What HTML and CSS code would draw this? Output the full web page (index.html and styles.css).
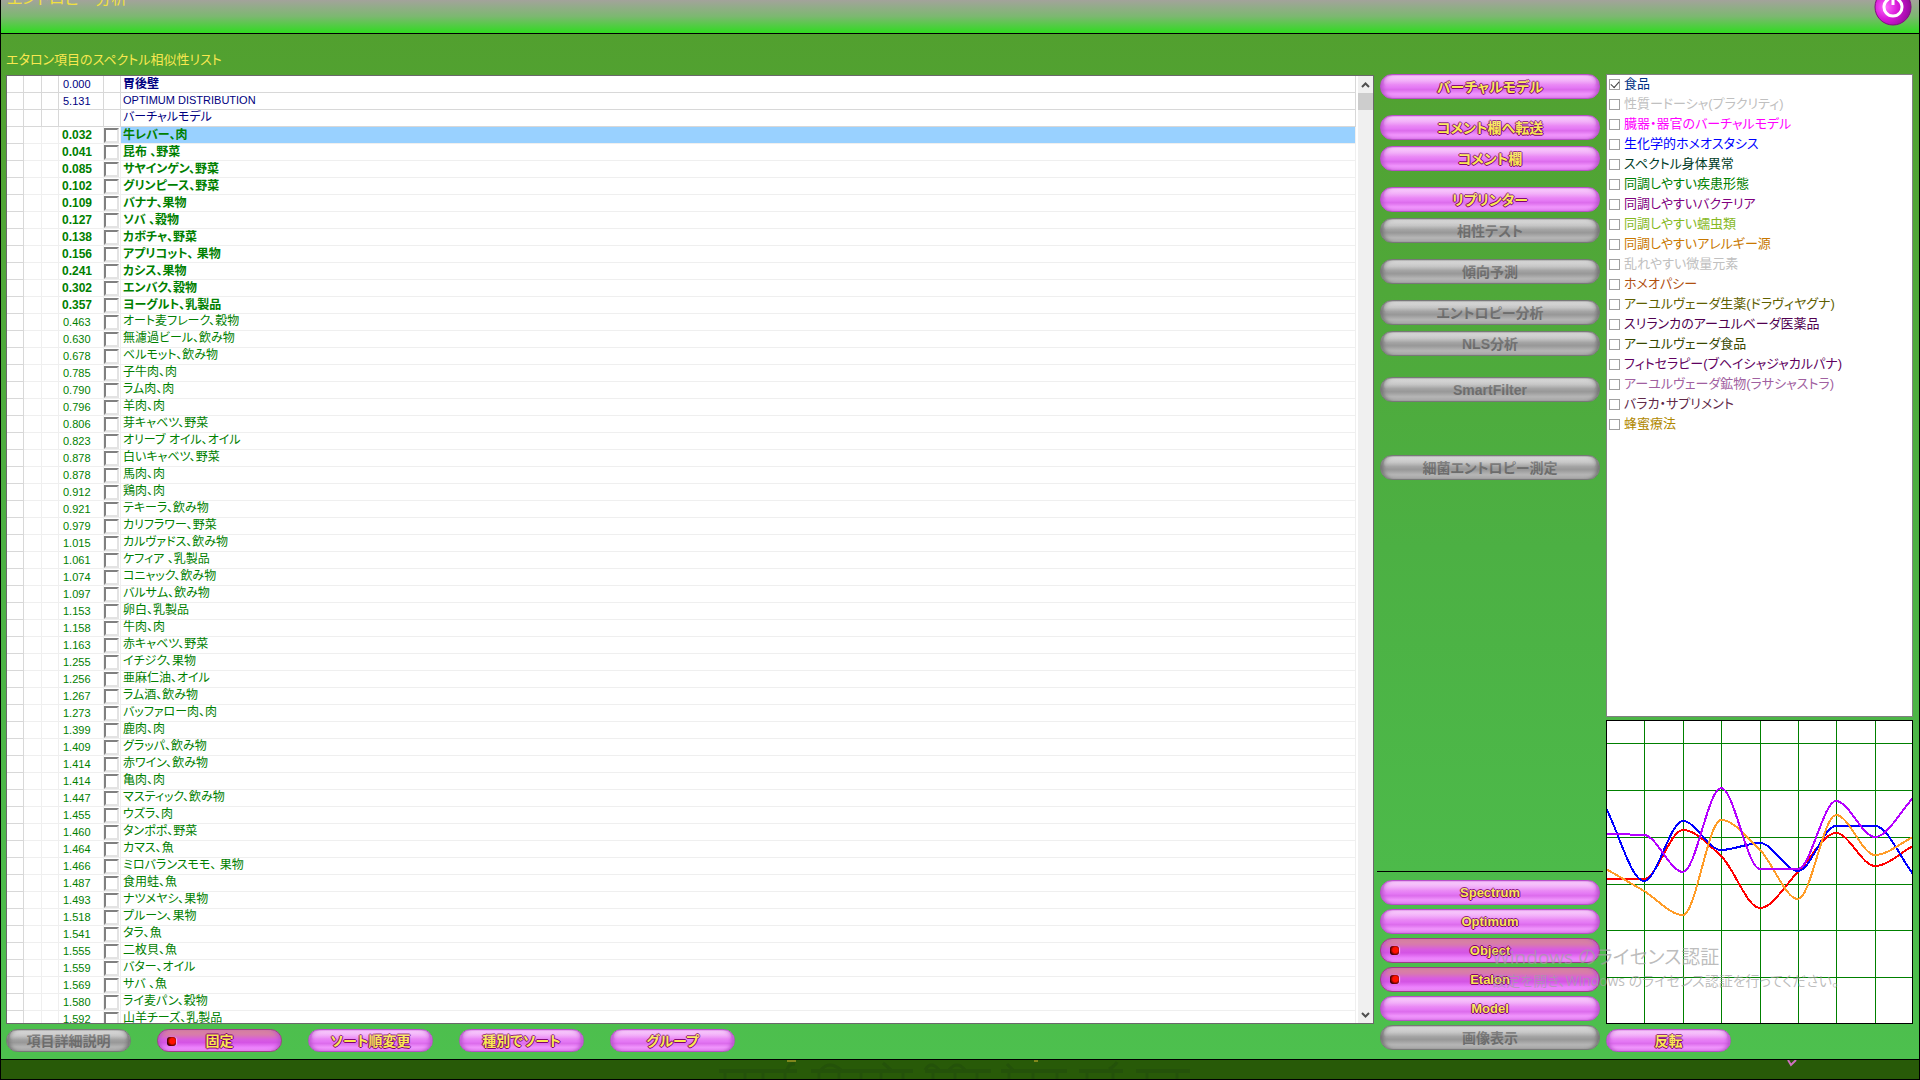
FILE: index.html
```html
<!DOCTYPE html>
<html lang="ja">
<head>
  <meta charset="UTF-8">
  <meta name="viewport" content="width=device-width, initial-scale=1.0">
  <title>エントロピー分析</title>
  <link rel="stylesheet" href="styles.css">
</head>
<body>
  <header>
    <h1>エントロピー分析</h1>
    <button class="power" aria-label="Power">
      <svg viewBox="0 0 38 38">
        <defs>
          <radialGradient id="powerFill" cx="0.3" cy="0.5" r="0.75">
            <stop offset="0" stop-color="#ff6cff" />
            <stop offset="0.45" stop-color="#d818d8" />
            <stop offset="1" stop-color="#8c0896" />
          </radialGradient>
        </defs>
        <circle cx="19" cy="19" r="18" fill="url(#powerFill)" stroke="#80107c" />
        <path d="M14 11.5a9 9 0 1 0 10 0" fill="none" stroke="#fff" stroke-width="3" stroke-linecap="round" />
        <path d="M19 7v10" stroke="#fff" stroke-width="3" />
      </svg>
    </button>
  </header>

  <main>
    <section class="list-column">
      <h2>エタロン項目のスペクトル相似性リスト</h2>
      <div class="list-pane">
        <div class="list-scroll">
          <table id="etalonList"><tbody></tbody></table>
        </div>
        <div class="scrollbar">
          <button aria-label="Up"><svg viewBox="0 0 15 16"><path d="M4 10l3.500-3.500L11 10" /></svg></button>
          <div class="thumb"></div>
          <button aria-label="Down" class="down"><svg viewBox="0 0 15 16"><path d="M4 6l3.500 3.500L11 6" /></svg></button>
        </div>
      </div>
      <div class="toolbar">
        <button class="pill" disabled>項目詳細説明</button>
        <button class="pill pressed">固定</button>
        <button class="pill">ソート順変更</button>
        <button class="pill">種別でソート</button>
        <button class="pill">グループ</button>
      </div>
    </section>

    <section class="action-column">
      <div class="group"><button class="pill">バーチャルモデル</button></div>
      <div class="group">
        <button class="pill">コメント欄へ転送</button>
        <button class="pill">コメント欄</button>
      </div>
      <div class="group">
        <button class="pill">リプリンター</button>
        <button class="pill" disabled>相性テスト</button>
      </div>
      <div class="group"><button class="pill" disabled>傾向予測</button></div>
      <div class="group">
        <button class="pill" disabled>エントロピー分析</button>
        <button class="pill" disabled>NLS分析</button>
      </div>
      <div class="group near-gap"><button class="pill" disabled>SmartFilter</button></div>
      <div class="group far-gap"><button class="pill" disabled>細菌エントロピー測定</button></div>
      <div class="views">
        <button class="pill">Spectrum</button>
        <button class="pill">Optimum</button>
        <button class="pill pressed">Object</button>
        <button class="pill pressed">Etalon</button>
        <button class="pill">Model</button>
        <button class="pill" disabled>画像表示</button>
      </div>
    </section>

    <section class="filter-column">
      <div class="filters" id="filters"></div>
      <svg class="chart" id="chart" viewBox="0 0 307 304"></svg>
      <div class="toolbar"><button class="pill">反転</button></div>
    </section>
  </main>

  <footer>
    <svg class="ornament" viewBox="0 0 490 19">
      <g class="shade">
        <path d="M8 11h78M100 11h102M214 11h66M290 11h66M368 11h44M425 11h54" stroke-width="4" />
        <path d="M14 12v7M34 12v7M52 12v7M74 12v7M108 12v7M128 12v7M150 12v7M170 12v7M192 12v7M222 12v7M244 12v7M266 12v7M298 12v7M322 12v7M346 12v7M376 12v7M402 12v7M436 12v7M466 12v7" stroke-width="3" />
        <path d="M76 10q2-7 8-6M110 10q8-10 20 0M172 3l8 7M214 10q6-10 14 0M238 10q8-10 16 0M296 4l6 6M398 9q6-3 8-7" stroke-width="3" />
      </g>
      <path d="M76 1h9M323 1h4" stroke="#d8b430" stroke-width="1" />
    </svg>
    <svg class="tick" viewBox="0 0 10 8"><path d="M1 0l3 5 5-5" fill="none" stroke="#d070c0" stroke-width="2" /></svg>
  </footer>

  <div class="activation">
    <p class="big">Windows のライセンス認証</p>
    <p>設定を開き、Windows のライセンス認証を行ってください。</p>
  </div>

  <script>
    const heads = [
      ['0.000', '胃後壁', 'bold'],
      ['5.131', 'OPTIMUM DISTRIBUTION', 'latin'],
      ['', 'バーチャルモデル', '']
    ];

    // First 11 rows are the close matches and are shown in bold
    const boldCount = 11;
    const items = [
      ['0.032', '牛レバー、肉'], ['0.041', '昆布 、野菜'], ['0.085', 'サヤインゲン、野菜'],
      ['0.102', 'グリンピース、野菜'], ['0.109', 'バナナ、果物'], ['0.127', 'ソバ 、穀物'],
      ['0.138', 'カボチャ、野菜'], ['0.156', 'アプリコット、 果物'], ['0.241', 'カシス、果物'],
      ['0.302', 'エンバク、穀物'], ['0.357', 'ヨーグルト、乳製品'], ['0.463', 'オート麦フレーク、穀物'],
      ['0.630', '無濾過ビール、飲み物'], ['0.678', 'ベルモット、飲み物'], ['0.785', '子牛肉、肉'],
      ['0.790', 'ラム肉、肉'], ['0.796', '羊肉、肉'], ['0.806', '芽キャベツ、野菜'],
      ['0.823', 'オリーブ オイル、オイル'], ['0.878', '白いキャベツ、野菜'], ['0.878', '馬肉、肉'],
      ['0.912', '鶏肉、肉'], ['0.921', 'テキーラ、飲み物'], ['0.979', 'カリフラワー、野菜'],
      ['1.015', 'カルヴァドス、飲み物'], ['1.061', 'ケフィア 、乳製品'], ['1.074', 'コニャック、飲み物'],
      ['1.097', 'バルサム、飲み物'], ['1.153', '卵白、乳製品'], ['1.158', '牛肉、肉'],
      ['1.163', '赤キャベツ、野菜'], ['1.255', 'イチジク、果物'], ['1.256', '亜麻仁油、オイル'],
      ['1.267', 'ラム酒、飲み物'], ['1.273', 'バッファロー肉、肉'], ['1.399', '鹿肉、肉'],
      ['1.409', 'グラッパ、飲み物'], ['1.414', '赤ワイン、飲み物'], ['1.414', '亀肉、肉'],
      ['1.447', 'マスティック、飲み物'], ['1.455', 'ウズラ、肉'], ['1.460', 'タンポポ、野菜'],
      ['1.464', 'カマス、魚'], ['1.466', 'ミロバランスモモ、 果物'], ['1.487', '食用蛙、魚'],
      ['1.493', 'ナツメヤシ、果物'], ['1.518', 'プルーン、果物'], ['1.541', 'タラ、魚'],
      ['1.555', '二枚貝、魚'], ['1.559', 'バター、オイル'], ['1.569', 'サバ 、魚'],
      ['1.580', 'ライ麦パン、穀物'], ['1.592', '山羊チーズ、乳製品']
    ];

    const tbody = document.querySelector('#etalonList tbody');
    const blanks = '<td class="c1"></td><td class="c2"></td><td class="c3"></td>';

    heads.forEach(([value, name, style]) => {
      const row = document.createElement('tr');
      row.className = 'head';
      row.innerHTML = `${blanks}<td class="value">${value}</td><td class="mark"></td><td class="name ${style}">${name}</td>`;
      tbody.appendChild(row);
    });

    items.forEach(([value, name], i) => {
      const row = document.createElement('tr');
      if (i < boldCount) row.classList.add('near');
      if (i === 0) row.classList.add('selected');
      row.innerHTML = `${blanks}<td class="value">${value}</td><td class="mark"><input type="checkbox" id="item${i}"></td><td class="name"><label for="item${i}">${name}</label></td>`;
      tbody.appendChild(row);
    });

    const filters = [
      ['食品', '#003084'], ['性質ードーシャ(プラクリティ)', '#c0c0c0'],
      ['臓器・器官のバーチャルモデル', '#ff00ff'], ['生化学的ホメオスタシス', '#0000ff'],
      ['スペクトル身体異常', '#003c28'], ['同調しやすい疾患形態', '#008000'],
      ['同調しやすいバクテリア', '#800080'], ['同調しやすい蠕虫類', '#86b81e'],
      ['同調しやすいアレルギー源', '#c87800'], ['乱れやすい微量元素', '#c0c0c0'],
      ['ホメオパシー', '#b05010'], ['アーユルヴェーダ生薬(ドラヴィヤグナ)', '#606000'],
      ['スリランカのアーユルベーダ医薬品', '#500050'], ['アーユルヴェーダ食品', '#384800'],
      ['フィトセラピー(ブヘイシャジャカルパナ)', '#600060'], ['アーユルヴェーダ鉱物(ラサシャストラ)', '#a060a0'],
      ['バラカ・サプリメント', '#602848'], ['蜂蜜療法', '#b08800']
    ];
    const filterBox = document.getElementById('filters');
    filters.forEach(([name, color], i) => {
      const label = document.createElement('label');
      label.style.color = color;
      label.innerHTML = `<input type="checkbox"${i === 0 ? ' checked' : ''}>${name}`;
      filterBox.appendChild(label);
    });

    // Chart: grid plus one smooth line per series
    const xs = [0, 38, 77, 115, 154, 192, 230, 269, 307];
    const gridY = [23, 70, 117, 164, 210, 257];
    const series = [
      { color: '#ff0000', y: [159, 159, 110, 136, 188, 152, 113, 146, 126] },
      { color: '#0000ff', y: [88, 161, 101, 130, 123, 151, 106, 106, 154] },
      { color: '#ff9c28', y: [149, 171, 195, 100, 130, 179, 95, 135, 117] },
      { color: '#b400ff', y: [114, 115, 152, 68, 149, 149, 81, 117, 78] }
    ];

    // Slope is flat at a peak or a trough, so the line never overshoots
    function slopeAt(y, i) {
      const last = xs.length - 1;
      if (i === 0) return (y[1] - y[0]) / (xs[1] - xs[0]);
      if (i === last) return (y[last] - y[last - 1]) / (xs[last] - xs[last - 1]);
      const a = (y[i] - y[i - 1]) / (xs[i] - xs[i - 1]);
      const b = (y[i + 1] - y[i]) / (xs[i + 1] - xs[i]);
      return a * b <= 0 ? 0 : 2 * a * b / (a + b);
    }

    function linePath(y) {
      let d = `M${xs[0]} ${y[0]}`;
      for (let i = 1; i < xs.length; i++) {
        const h = (xs[i] - xs[i - 1]) / 3;
        d += `C${xs[i - 1] + h} ${y[i - 1] + slopeAt(y, i - 1) * h} ${xs[i] - h} ${y[i] - slopeAt(y, i) * h} ${xs[i]} ${y[i]}`;
      }
      return d;
    }

    let svg = '';
    xs.slice(1, -1).forEach(x => svg += `<path class="grid" d="M${x} 0V304" />`);
    gridY.forEach(y => svg += `<path class="grid" d="M0 ${y}H307" />`);
    series.forEach(s => svg += `<path class="line" stroke="${s.color}" d="${linePath(s.y)}" />`);
    svg += '<rect class="frame" x="0" y="0" width="306" height="303" />';
    document.getElementById('chart').innerHTML = svg;
  </script>
</body>
</html>
```

FILE: styles.css
```css
* { box-sizing: border-box; }
body {
  margin: 0;
  height: 100vh;
  overflow: hidden;
  display: flex;
  flex-direction: column;
  position: relative;
  border: 1px solid #000;
  border-top: none;
  background-color: #285a08;
  font-family: "Liberation Sans", "Noto Sans CJK JP", sans-serif;
  font-feature-settings: "palt";
  font-size: 12px;
}
button, input { font-family: inherit; font-feature-settings: inherit; margin: 0; padding: 0; }

header {
  height: 34px;
  display: flex;
  justify-content: space-between;
  align-items: flex-end;
  padding: 0 7px 0 6px;
  overflow: hidden;
  background: linear-gradient(#a3a39b, #7cb870 50%, #30dc20);
  border-bottom: 1px solid #000;
}
header h1 {
  margin: 0 0 24px;
  font-size: 16px;
  line-height: 20px;
  font-weight: normal;
  color: #f0e040;
}
.power {
  width: 38px;
  height: 38px;
  flex: none;
  margin-bottom: 7px;
  border: none;
  background: none;
}
.power svg { display: block; }

main {
  flex: 1;
  min-height: 0;
  display: flex;
  gap: 6px;
  padding: 0 6px 7px 5px;
  background: linear-gradient(#52a02f, #4cb043 50%, #4dc04e);
  border-bottom: 1px solid #000;
}

/* Similarity list */
.list-column { flex: 1; min-width: 0; display: flex; flex-direction: column; }
.list-column h2 {
  margin: 0;
  padding-top: 16px;
  height: 41px;
  font-size: 13px;
  line-height: 20px;
  font-weight: normal;
  color: #f8e850;
}
.list-pane {
  flex: 1;
  min-height: 0;
  display: flex;
  background: #fff;
  border: 1px solid #696969;
}
.list-scroll { flex: 1; min-width: 0; overflow: hidden; }
table { width: 100%; table-layout: fixed; border-collapse: separate; border-spacing: 0; }
td {
  height: 17px;
  padding: 0;
  line-height: 16px;
  color: #008000;
  border-right: 1px solid #efefef;
  border-bottom: 1px solid #efefef;
  white-space: nowrap;
  overflow: hidden;
}
.c1 { width: 17px; border-color: #d8d8d8; }
.c2 { width: 18px; }
.c3 { width: 17px; }
.value { width: 45px; padding-left: 4px; font-size: 11px; }
.mark { width: 17px; }
.name { padding-left: 2px; line-height: 14px; vertical-align: top; }
.head td { color: #000080; border-color: #d8d8d8; }
.head .bold { font-weight: bold; line-height: 16px; }
.head .latin { font-size: 11px; }
.near .value, .near .name { font-size: 12px; font-weight: bold; line-height: 16px; }
.near .value { padding-left: 3px; }
.selected .name { background-color: #99d1ff; }
.name label { display: block; }
td input {
  appearance: none;
  display: block;
  width: 15px;
  height: 15px;
  background: #fff;
  border: 2px solid;
  border-color: #808080 #e3e3e3 #e3e3e3 #808080;
}

.scrollbar {
  width: 17px;
  display: flex;
  flex-direction: column;
  background: #f0f0f0;
  border-left: 2px solid #fff;
}
.scrollbar button { height: 17px; border: none; background: none; }
.scrollbar svg { display: block; width: 15px; height: 16px; fill: none; stroke: #505050; stroke-width: 2; }
.scrollbar .thumb { height: 17px; background: #cdcdcd; }
.scrollbar .down { margin-top: auto; }

/* Buttons */
.pill {
  display: block;
  width: 100%;
  height: 25px;
  position: relative;
  border: 1px solid #b850c8;
  border-radius: 12px;
  background: linear-gradient(#f8c0fc, #f0a0f8 25%, #e880f4 42%, #e478f4 55%, #dc6cec 64%, #f094fc 82%, #e888f4);
  box-shadow: inset 4px 0 4px -2px #b850cc, inset -4px 0 4px -2px #b850cc;
  color: #f8e850;
  font-size: 14px;
  line-height: 22px;
  font-weight: bold;
  text-shadow: 1px 0 #800070, -1px 0 #800070, 0 1px #800070, 0 -1px #800070;
}
.pill::before {
  content: "";
  position: absolute;
  inset: 1px 3px 10px;
  border-radius: 10px;
  background: linear-gradient(#fff4, #fff0);
}
.pill.pressed {
  border-color: #a03c88;
  background: linear-gradient(#d88898, #d878b0 25%, #d85ce0 45%, #d454e4 60%, #ec80fc 82%, #f090f8);
}
.pill.pressed::before { background: none; }
.pill.pressed::after {
  content: "";
  position: absolute;
  left: 9px;
  top: 7px;
  width: 9px;
  height: 9px;
  border-radius: 3px;
  background: radial-gradient(circle at 60% 45%, #ff1000 35%, #300000 75%);
  box-shadow: 1px 0 1px #f4b0f4;
}
.pill:disabled {
  border-color: #787878;
  background: linear-gradient(#d0d0d0, #bcbcbc 28%, #a0a0a0 45%, #989898 60%, #b4b4b4 80%, #b0b0b0);
  box-shadow: inset 4px 0 4px -2px #707070, inset -4px 0 4px -2px #707070;
  color: #6c6c6c;
  text-shadow: none;
}
.toolbar { display: flex; gap: 26px; margin-top: 5px; }
.toolbar .pill { width: 125px; height: 23px; line-height: 20px; }

.action-column { width: 220px; display: flex; flex-direction: column; padding: 40px 0 2px; }
.group { display: flex; flex-direction: column; gap: 6px; margin-bottom: 16px; }
.near-gap { margin-top: 5px; }
.far-gap { margin-top: 37px; }
.views {
  display: flex;
  flex-direction: column;
  gap: 4px;
  margin: auto -3px 0;
  padding: 8px 3px 0;
  border-top: 1px solid #000;
}
.views .pill { font-size: 13px; }
.views .pill:disabled { font-size: 14px; }

/* Filters and chart */
.filter-column { width: 307px; display: flex; flex-direction: column; padding-top: 40px; }
.filters {
  flex: 1;
  min-height: 0;
  overflow: hidden;
  padding: 0 2px;
  background: #fff;
  border: 1px solid #808080;
}
.filters label {
  display: flex;
  align-items: center;
  gap: 4px;
  height: 20px;
  padding-bottom: 2px;
  font-size: 13px;
  line-height: 18px;
  white-space: nowrap;
}
.filters input {
  appearance: none;
  flex: none;
  width: 11px;
  height: 11px;
  border: 1px solid #a0a0a0;
}
.filters input:checked::before {
  content: "";
  display: block;
  width: 7px;
  height: 4px;
  margin: 1px 0 0 1px;
  border: solid #404040;
  border-width: 0 0 1px 1px;
  transform: rotate(-48deg);
}
.chart { display: block; width: 100%; margin-top: 3px; background: #fff; shape-rendering: crispEdges; }
.grid { stroke: #008000; stroke-width: 1; }
.line { fill: none; stroke-width: 2; }
.frame { fill: none; stroke: #000; stroke-width: 1; }

footer { height: 19px; position: relative; overflow: hidden; }
.ornament { position: absolute; left: 37%; top: 0; width: 490px; height: 19px; }
.ornament .shade { fill: none; stroke: #24520a; }
.tick { position: absolute; right: 122px; top: 0; width: 10px; height: 8px; }

/* System notice drawn over everything */
.activation {
  position: absolute;
  right: 80px;
  bottom: 86px;
  color: #a0a0a0b0;
  pointer-events: none;
  white-space: nowrap;
  font-family: "Open Sans", "Noto Sans CJK JP", sans-serif;
}
.activation p { margin: 0; font-size: 14px; line-height: 24px; }
.activation .big { font-size: 19px; }
```
